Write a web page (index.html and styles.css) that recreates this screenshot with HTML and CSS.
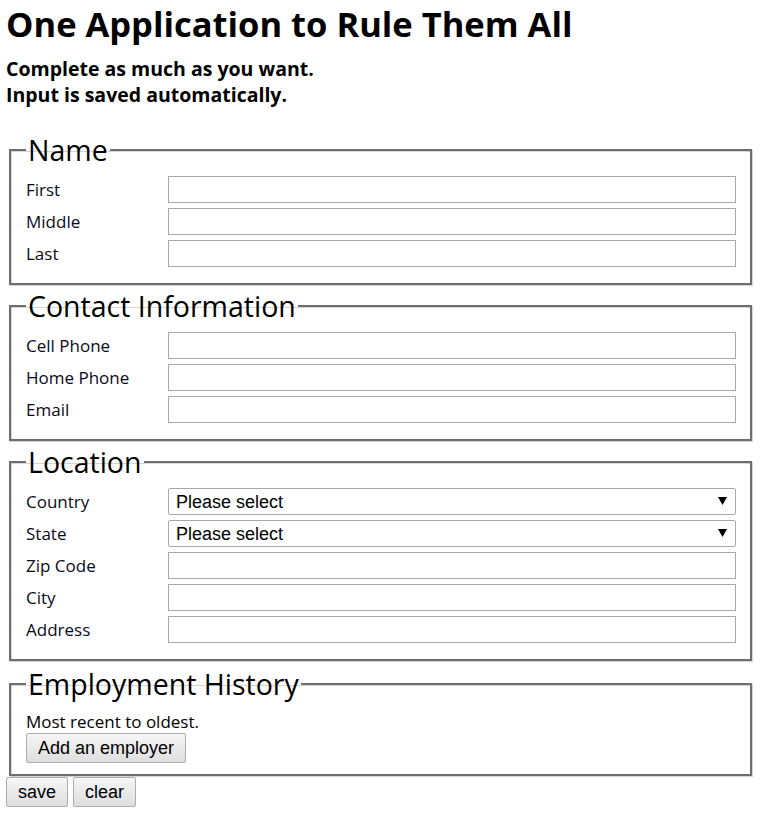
FILE: index.html
```html
<!DOCTYPE html>
<html lang="en">
<head>
<meta charset="utf-8">
<title>One Application to Rule Them All</title>
<link rel="stylesheet" href="styles.css">
</head>
<body>
<h1 class="title">One Application to Rule Them All</h1>
<p class="intro">Complete as much as you want.<br>Input is saved automatically.</p>
<form class="app">
  <fieldset class="group">
    <legend class="group-title">Name</legend>
    <div class="row"><label class="field-label" for="f-first">First</label><input class="field" id="f-first" type="text"></div>
    <div class="row"><label class="field-label" for="f-middle">Middle</label><input class="field" id="f-middle" type="text"></div>
    <div class="row"><label class="field-label" for="f-last">Last</label><input class="field" id="f-last" type="text"></div>
  </fieldset>
  <fieldset class="group">
    <legend class="group-title">Contact Information</legend>
    <div class="row"><label class="field-label" for="f-cell">Cell Phone</label><input class="field" id="f-cell" type="text"></div>
    <div class="row"><label class="field-label" for="f-home">Home Phone</label><input class="field" id="f-home" type="text"></div>
    <div class="row"><label class="field-label" for="f-email">Email</label><input class="field" id="f-email" type="text"></div>
  </fieldset>
  <fieldset class="group">
    <legend class="group-title">Location</legend>
    <div class="row"><label class="field-label" for="f-country">Country</label>
      <div class="select-wrap"><select class="field select" id="f-country"><option>Please select</option></select><svg class="arrow" width="9" height="8" viewBox="0 0 9 8"><polygon points="0,0 9,0 4.5,8" fill="#000"/></svg></div></div>
    <div class="row"><label class="field-label" for="f-state">State</label>
      <div class="select-wrap"><select class="field select" id="f-state"><option>Please select</option></select><svg class="arrow" width="9" height="8" viewBox="0 0 9 8"><polygon points="0,0 9,0 4.5,8" fill="#000"/></svg></div></div>
    <div class="row"><label class="field-label" for="f-zip">Zip Code</label><input class="field" id="f-zip" type="text"></div>
    <div class="row"><label class="field-label" for="f-city">City</label><input class="field" id="f-city" type="text"></div>
    <div class="row"><label class="field-label" for="f-address">Address</label><input class="field" id="f-address" type="text"></div>
  </fieldset>
  <fieldset class="group group-last">
    <legend class="group-title">Employment History</legend>
    <p class="note">Most recent to oldest.</p>
    <button class="btn" type="button">Add an employer</button>
  </fieldset>
  <div class="actions">
    <button class="btn" type="button">save</button>
    <button class="btn" type="button">clear</button>
  </div>
</form>
</body>
</html>
```
FILE: styles.css
```css
body {
  margin: 0 6px;
  font-family: "Open Sans", "Noto Sans", sans-serif;
  font-size: 17px;
  color: #000;
  background: #fff;
}
.title {
  margin: 0;
  padding-top: 2px;
  font-size: 34.5px;
  line-height: 44px;
  font-weight: 700;
}
.intro {
  margin: 10px 0 0;
  font-size: 19.5px;
  line-height: 26px;
  font-weight: 700;
}
.app {
  margin-top: 24px;
}
.group {
  margin: 0 3px 3px;
  padding: 8px 14px 11px 15px;
  border: 2px solid #6e6e6e;
  box-shadow: inset 1px 1px 0 #d4d4d4, 1px 1px 0 #d4d4d4;
}
.group-last {
  margin-top: 5px;
  margin-bottom: 1px;
}
.group-title {
  padding: 0 2px;
  font-size: 28.5px;
  line-height: 36px;
}
.row {
  display: grid;
  grid-template-columns: 142px 1fr;
  align-items: center;
  margin-bottom: 5px;
}
.field-label {
  line-height: 27px;
  color: #0a0a1a;
}
.field {
  box-sizing: border-box;
  width: 100%;
  height: 27px;
  margin: 0;
  border: 1px solid #a9a9a9;
  background: #fff;
  font-family: "Liberation Sans", Arial, sans-serif;
  font-size: 18px;
}
.select-wrap {
  position: relative;
}
.select {
  appearance: none;
  -webkit-appearance: none;
  padding: 0 24px 0 7px;
  border-radius: 2px;
  color: #000;
}
.arrow {
  position: absolute;
  right: 9px;
  top: 9px;
  pointer-events: none;
}
.note {
  margin: 0;
  line-height: 23px;
}
.btn {
  box-sizing: border-box;
  height: 30px;
  margin: 0;
  padding: 0 11px;
  border: 1px solid #adadad;
  border-radius: 2px;
  background: linear-gradient(#f6f6f6, #dedede);
  font-family: "Liberation Sans", Arial, sans-serif;
  font-size: 18px;
  color: #000;
}
.actions {
  display: flex;
  gap: 5px;
}
```
